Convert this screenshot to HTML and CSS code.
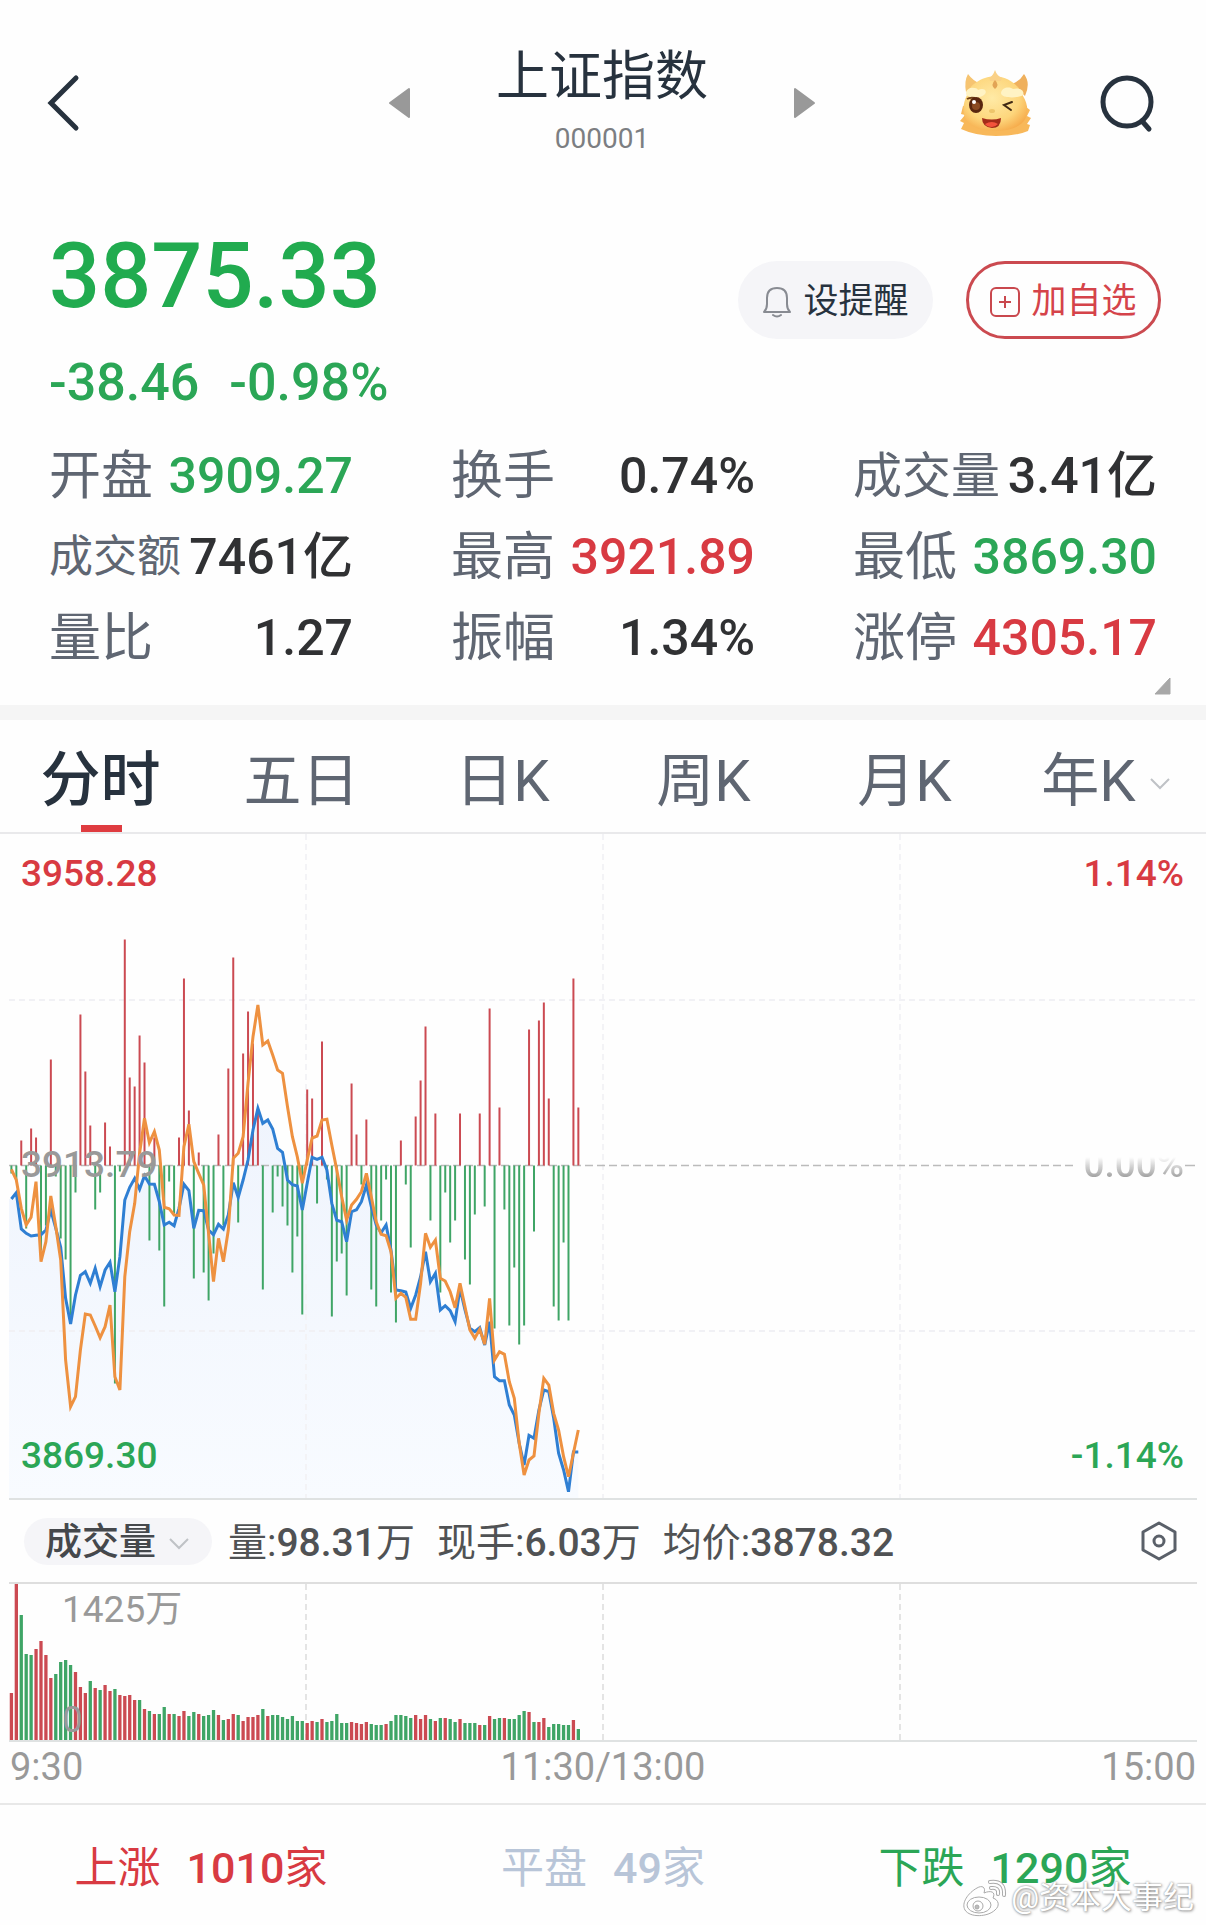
FILE: index.html
```html
<!DOCTYPE html>
<html lang="zh-CN">
<head>
  <meta charset="UTF-8" />
  <meta name="viewport" content="width=device-width, initial-scale=1.0" />
  <title>上证指数 000001</title>
  <link rel="stylesheet" href="styles.css">
</head>
<body>

  <header class="topbar">
    <button class="icon-btn back" aria-label="返回">
      <svg width="34" height="58" viewBox="0 0 34 58"><path d="M29 4 L4 29 L29 54" fill="none" stroke="#27323e" stroke-width="5" stroke-linecap="round" /></svg>
    </button>
    <div class="switcher">
      <button class="icon-btn" aria-label="上一个">
        <svg width="22" height="32" viewBox="0 0 22 32"><path d="M21 2 V30 L2 16 Z" fill="#999" stroke="#999" stroke-width="2" stroke-linejoin="round" /></svg>
      </button>
      <div class="name">
        <h1>上证指数</h1>
        <p>000001</p>
      </div>
      <button class="icon-btn" aria-label="下一个">
        <svg width="22" height="32" viewBox="0 0 22 32"><path d="M1 2 V30 L20 16 Z" fill="#999" stroke="#999" stroke-width="2" stroke-linejoin="round" /></svg>
      </button>
    </div>
    <div class="tools">
      <button class="icon-btn" aria-label="助手">
        <svg width="74" height="68" viewBox="0 0 74 68">
          <defs>
            <radialGradient id="face" cx="45%" cy="40%" r="65%">
              <stop offset="0" stop-color="#ffeaa6" />
              <stop offset="0.65" stop-color="#fdd67c" />
              <stop offset="1" stop-color="#f6ab4b" />
            </radialGradient>
          </defs>
          <path d="M5 37 L3 45 L7 46 L2 52 L6 54 L3 60 Q18 67 38 67 Q58 67 70 62 L72 56 L69 55 L73 49 L69 47 L72 41 L68 38 Z" fill="#f8b85a" />
          <path d="M8 23 Q6 12 10 5 Q15 12 23 15 Z" fill="#f6c471" />
          <path d="M54 15 Q62 12 66 5 Q73 14 67 27 Z" fill="#efb05d" />
          <path d="M37 7 C51 8 62 17 65 27 C73 40 73 61 38 62 C2 62 2 40 9 26 C11 16 23 8 37 7 Z" fill="url(#face)" />
          <path d="M31 9 Q35 7 37 1 Q39 7 44 9 L43 12 H32 Z" fill="#fad187" />
          <path d="M37 11 Q32 16 37 20 Q42 16 37 11 Z" fill="#e2a455" />
          <path d="M8 25 C8 17 19 18 20 21 C27 18 30 23 26 26 C21 30 9 29 8 25 Z M43 24 C44 17 53 18 55 20 C62 18 67 22 65 26 C62 29 43 30 43 24 Z" fill="#fff3c4" />
          <path d="M9 30 Q12 28 17 29" fill="none" stroke="#704018" stroke-width="2" />
          <ellipse cx="18" cy="36" rx="7" ry="8" fill="#59260f" />
          <circle cx="18" cy="37" r="4" fill="#8b4a22" />
          <circle cx="16" cy="33" r="2" fill="#fff" />
          <path d="M54 33 L46 36 L53 41" fill="none" stroke="#402914" stroke-width="2" stroke-linecap="round" />
          <ellipse cx="34" cy="42" rx="3" ry="2" fill="#eec56b" />
          <path d="M24 49 Q34 52 43 49 Q43 59 34 59 Q24 58 24 49 Z" fill="#a32c19" />
          <path d="M27 55 Q34 51 40 55 Q37 58 34 58 Q29 58 27 55 Z" fill="#f4533c" />
        </svg>
      </button>
      <button class="icon-btn" aria-label="搜索">
        <svg width="58" height="60" viewBox="0 0 58 60"><g fill="none" stroke="#27323e" stroke-width="5" stroke-linecap="round"><circle cx="28" cy="29" r="24" /><path d="M43 48 L50 56" /></g></svg>
      </button>
    </div>
  </header>

  <section class="quote">
    <div class="price-row">
      <div class="price down">3875.33</div>
      <div class="actions">
        <button class="pill remind">
          <svg width="30" height="32" viewBox="0 0 30 32"><g fill="none" stroke="#888b92" stroke-width="2" stroke-linecap="round" stroke-linejoin="round"><path d="M2 26 Q5 23 5 18 V12 Q5 2 15 2 Q25 2 25 12 V18 Q25 23 28 26 Z" /><path d="M11 29 Q15 32 19 29" /></g></svg>
          设提醒
        </button>
        <button class="pill add">
          <svg width="30" height="32" viewBox="0 0 30 32"><g fill="none" stroke="#c9484e" stroke-width="2"><rect x="1" y="2" width="28" height="28" rx="5" /><path d="M9 16 H21 M15 10 V22" /></g></svg>
          加自选
        </button>
      </div>
    </div>
    <div class="change down"><span>-38.46</span><span>-0.98%</span></div>

    <dl class="stats">
      <div><dt>开盘</dt><dd class="down">3909.27</dd></div>
      <div><dt>换手</dt><dd>0.74%</dd></div>
      <div><dt class="three">成交量</dt><dd>3.41亿</dd></div>
      <div><dt class="small">成交额</dt><dd>7461亿</dd></div>
      <div><dt>最高</dt><dd class="up">3921.89</dd></div>
      <div><dt>最低</dt><dd class="down">3869.30</dd></div>
      <div><dt>量比</dt><dd>1.27</dd></div>
      <div><dt>振幅</dt><dd>1.34%</dd></div>
      <div><dt>涨停</dt><dd class="up">4305.17</dd></div>
    </dl>
    <svg class="more" width="17" height="18" viewBox="0 0 17 18"><path d="M16 1 V17 H1 Z" fill="#a8a8a8" stroke="#a8a8a8" stroke-linejoin="round" /></svg>
  </section>

  <nav class="tabs">
    <button class="active">分时</button>
    <button>五日</button>
    <button>日K</button>
    <button>周K</button>
    <button>月K</button>
    <button>年K <svg width="20" height="12" viewBox="0 0 20 12"><path d="M1 1 L10 10 L19 1" fill="none" stroke="#bfc2c6" stroke-width="2" /></svg></button>
  </nav>

  <div class="chart">
    <svg id="trend" viewBox="0 0 1188 664">
      <defs>
        <linearGradient id="fill" x1="0" y1="0" x2="0" y2="1">
          <stop offset="0" stop-color="#eff4fd" />
          <stop offset="1" stop-color="#f8fbff" />
        </linearGradient>
      </defs>
    </svg>
    <span class="tag top left up">3958.28</span>
    <span class="tag top right up">1.14%</span>
    <span class="tag mid left">3913.79</span>
    <span class="tag mid right fading">0.00%</span>
    <span class="tag low left down">3869.30</span>
    <span class="tag low right down">-1.14%</span>
  </div>

  <div class="legend">
    <div class="picker">
      <select aria-label="指标">
        <option>成交量</option>
        <option>成交额</option>
        <option>量比</option>
      </select>
      <svg width="20" height="12" viewBox="0 0 20 12"><path d="M1 1 L10 10 L19 1" fill="none" stroke="#bfc2c6" stroke-width="2" /></svg>
    </div>
    <span>量:<b>98.31</b>万</span>
    <span>现手:<b>6.03</b>万</span>
    <span>均价:<b>3878.32</b></span>
    <button class="icon-btn settings" aria-label="设置">
      <svg width="38" height="40" viewBox="0 0 38 40"><g fill="none" stroke="#5a6069" stroke-width="3" stroke-linejoin="round"><path d="M19 2 L35 11 V29 L19 38 L3 29 V11 Z" /><circle cx="19" cy="20" r="5" /></g></svg>
    </button>
  </div>

  <div class="chart volume">
    <svg id="volume" viewBox="0 0 1188 156"></svg>
    <span class="tag vol-max">1425万</span>
    <span class="tag vol-min">0</span>
  </div>
  <div class="axis"><span>9:30</span><span>11:30/13:00</span><span>15:00</span></div>

  <footer class="breadth">
    <div class="up"><span>上涨</span><span><b>1010</b>家</span></div>
    <div class="flat"><span>平盘</span><span><b>49</b>家</span></div>
    <div class="down"><span>下跌</span><span><b>1290</b>家</span></div>
    <div class="watermark">
      <svg width="46" height="38" viewBox="0 0 46 38">
        <g fill="#fff" stroke="#aaa" stroke-width="1">
          <path d="M15 9 C20 6 24 8 22 14 C29 11 34 13 31 19 C37 21 38 27 33 31 C26 38 8 39 3 31 C-1 24 6 14 15 9 Z" />
          <ellipse cx="17" cy="26" rx="12" ry="8" />
          <circle cx="16" cy="27" r="5" />
          <circle cx="15" cy="28" r="2" fill="#bbb" />
        </g>
        <path d="M28 3 Q43 1 42 16 M29 9 Q37 8 36 15" fill="none" stroke="#aaa" stroke-width="4" stroke-linecap="round" />
        <path d="M28 3 Q43 1 42 16 M29 9 Q37 8 36 15" fill="none" stroke="#fff" stroke-width="2" stroke-linecap="round" />
      </svg>
      <span>@资本大事纪</span>
    </div>
  </footer>

  <script src="script.js"></script>
</body>
</html>
```

FILE: styles.css
```css
* {
  box-sizing: border-box;
}

body {
  margin: 0;
  font-family: Roboto, "Noto Sans CJK SC", sans-serif;
  background: #fefefe;
  color: #303133;
}

h1, p, dl, dd {
  margin: 0;
}

button, select {
  font-family: inherit;
  border: none;
  background: none;
  padding: 0;
  cursor: pointer;
}

svg {
  display: block;
}

b {
  font-weight: 500;
}

.up {
  color: #d83a42;
}

.down {
  color: #2ba656;
}

/* top bar */
.topbar {
  display: grid;
  grid-template-columns: 1fr auto 1fr;
  align-items: center;
  padding: 46px 49px 0 47px;
}

.switcher {
  display: flex;
  align-items: center;
}

.name {
  width: 384px;
  text-align: center;
}

.name h1 {
  font-size: 53px;
  line-height: 62px;
  font-weight: 400;
  color: #27323e;
}

.name p {
  margin-top: 11px;
  font-size: 28px;
  line-height: 40px;
  color: #7c7e82;
}

.tools {
  display: flex;
  align-items: center;
  justify-content: flex-end;
  gap: 67px;
}

/* quote */
.quote {
  position: relative;
  padding: 68px 49px 36px;
  border-bottom: 15px solid #f5f5f5;
}

.price-row {
  display: flex;
  justify-content: space-between;
}

.price {
  font-size: 90px;
  line-height: 100px;
  font-weight: 500;
  color: #21ab4f;
}

.actions {
  display: flex;
  gap: 33px;
  padding-top: 34px;
  margin-right: -4px;
}

.pill {
  display: flex;
  align-items: center;
  justify-content: center;
  gap: 11px;
  width: 195px;
  height: 78px;
  padding-top: 4px;
  border-radius: 39px;
  font-size: 35px;
  line-height: 50px;
}

.remind {
  background: #f5f5f8;
  color: #27323e;
}

.add {
  border: 3px solid #cb4a50;
  color: #d5434a;
}

.change {
  display: flex;
  gap: 30px;
  margin-top: 14px;
  font-size: 52px;
  line-height: 60px;
  font-weight: 500;
}

.stats {
  display: grid;
  grid-template-columns: repeat(3, 1fr);
  column-gap: 98px;
  row-gap: 20px;
  margin-top: 33px;
}

.stats div {
  display: flex;
  justify-content: space-between;
  align-items: center;
  line-height: 61px;
  white-space: nowrap;
}

.stats dt {
  font-size: 52px;
  color: #5f6672;
}

.stats .three {
  font-size: 49px;
}

.stats .small {
  font-size: 44px;
}

.stats dd {
  font-size: 50px;
  font-weight: 500;
}

.more {
  position: absolute;
  right: 35px;
  bottom: 10px;
}

/* tabs */
.tabs {
  display: grid;
  grid-template-columns: repeat(6, 1fr);
  border-bottom: 2px solid #e9e9eb;
}

.tabs button {
  position: relative;
  display: flex;
  align-items: center;
  justify-content: center;
  height: 112px;
  padding-top: 10px;
  font-size: 58px;
  line-height: 70px;
  color: #5f6672;
}

.tabs svg {
  margin: 6px 0 0 14px;
}

.tabs .active {
  color: #27323e;
  font-size: 60px;
  font-weight: 500;
}

.tabs .active::after {
  content: "";
  position: absolute;
  left: 50%;
  bottom: 0;
  width: 41px;
  height: 7px;
  margin-left: -20px;
  background: #df3c40;
}

/* charts */
.chart {
  position: relative;
  margin: 0 9px;
  border-bottom: 2px solid #dfe2e2;
}

.chart svg {
  width: 100%;
  height: auto;
}

.volume {
  border-top: 2px solid #dedede;
}

.tag {
  position: absolute;
  font-size: 37px;
  line-height: 44px;
  font-weight: 500;
}

.tag.left { left: 12px; }
.tag.right { right: 13px; }
.tag.top { top: 18px; }
.tag.low { bottom: 20px; }

.tag.mid {
  top: 309px;
  color: #999;
}

.tag.fading {
  background: linear-gradient(transparent 32%, #999 82%);
  -webkit-background-clip: text;
  background-clip: text;
  color: transparent;
}

.tag.vol-max, .tag.vol-min {
  left: 53px;
  color: #999;
  font-weight: 400;
}

.tag.vol-max { top: 4px; }
.tag.vol-min { bottom: -2px; }

.legend {
  display: flex;
  align-items: center;
  gap: 22px;
  height: 82px;
  padding: 0 28px 0 24px;
  font-size: 39px;
  line-height: 46px;
  color: #505254;
  white-space: nowrap;
}

.legend > span {
  padding-top: 4px;
}

.picker {
  position: relative;
  margin-right: -6px;
}

.picker select {
  display: block;
  appearance: none;
  width: 188px;
  height: 47px;
  padding: 3px 0 0 21px;
  border-radius: 24px;
  background: #f5f5f8;
  font-size: 37px;
  font-weight: 500;
  color: #45484c;
}

.picker svg {
  position: absolute;
  right: 23px;
  top: 20px;
  pointer-events: none;
}

.settings {
  margin-left: auto;
}

.axis {
  display: grid;
  grid-template-columns: 1fr auto 1fr;
  padding: 0 10px 11px;
  border-bottom: 2px solid #e8e8e8;
  font-size: 38px;
  line-height: 50px;
  color: #999;
}

.axis span:last-child {
  text-align: right;
}

/* breadth */
.breadth {
  position: relative;
  display: grid;
  grid-template-columns: repeat(3, 1fr);
  padding: 33px 0 28px;
  font-size: 43px;
  line-height: 60px;
}

.breadth > div {
  display: flex;
  justify-content: center;
  gap: 26px;
}

.breadth .flat {
  color: #b8c5d8;
}

.breadth .watermark {
  position: absolute;
  right: 12px;
  bottom: 8px;
  align-items: center;
  gap: 3px;
  font-size: 31px;
  line-height: 40px;
  color: #fff;
  text-shadow: 0 0 2px #888, 1px 1px 3px #999;
}
```

FILE: script.js
```js
const RED = "#cb4a52";
const GREEN = "#3fa566";
const STEP = 4.93;
const START = 2.4;

// minute -> order flow, positive above the middle line, negative below
const flow = {
  0: -8, 1: -15, 2: 25, 3: -63, 4: 37, 5: 28, 6: -85, 7: -60, 8: 106, 9: -11,
  10: -73, 11: -94, 12: -150, 13: -27, 14: 151, 15: 94, 16: 40, 17: -44, 18: -27, 19: 43,
  20: 19, 21: -218, 22: -6, 23: 226, 24: 88, 25: 79, 26: 130, 27: 103, 28: -75, 29: 28,
  30: -85, 31: -141, 32: -16, 33: -48, 34: 28, 35: 187, 36: 55, 37: -113, 38: 13, 39: -107,
  40: -135, 41: -88, 42: 31, 43: -60, 44: 97, 45: 208, 46: -57, 47: 112, 48: 154, 49: 122,
  50: 55, 51: -124, 53: -47, 54: -11, 55: -41, 56: -60, 57: -107, 58: -71, 59: -149,
  60: 76, 61: 67, 62: -38, 63: 124, 64: -14, 65: -151, 66: -96, 67: -88, 68: -130, 69: 82,
  70: 31, 71: -19, 72: 46, 73: -124, 74: -141, 75: -55, 76: -14, 77: -127, 78: -157, 79: 25,
  80: -19, 81: -82, 82: 49, 83: 85, 84: 139, 85: -55, 86: 52, 87: -127, 88: -27, 89: -77,
  90: -55, 91: 52, 92: -94, 93: -119, 94: -49, 95: 52, 96: -41, 97: 157, 98: -163, 99: 58,
  100: -44, 101: -160, 102: -102, 103: -179, 104: -160, 105: 136, 106: -66, 107: 145, 108: 163, 109: 67,
  110: -141, 111: -155, 112: -77, 113: -155, 114: 187, 115: 58
};

const index = [
  117, 98, 207, 220, 228, 226, 224, 210, 150, 205, 262, 415, 492, 405, 346, 335, 370, 325, 380, 330,
  307, 395, 290, 120, 82, 55, 88, 47, 72, 73, 125, 195, 187, 197, 145, 73, 92, 205, 151, 152,
  210, 224, 193, 207, 165, 68, 112, 60, 0, -90, -155, -110, -120, -93, -35, -23, 60, 74, 78, 150,
  70, -8, -2, -8, 30, 130, 181, 185, 245, 155, 149, 125, 75, 140, 195, 218, 195, 270, 390, 392,
  396, 445, 405, 350, 275, 365, 340, 450, 437, 452, 485, 385, 450, 505, 515, 503, 555, 485, 650, 662,
  662, 735, 765, 850, 915, 826, 835, 750, 690, 695, 775, 880, 930, 995, 876, 876
];

const average = [
  28, 60, 145, 195, 172, 65, 305, 245, 108, 200, 300, 600, 740, 710, 570, 462, 465, 498, 533, 500,
  435, 650, 690, 350, 215, 130, -20, -125, -52, -85, -30, 142, 146, 165, 166, -40, -107, 5, 40, 75,
  220, 365, 235, 305, 210, -5, -20, -70, -230, -370, -465, -345, -357, -315, -270, -260, -160, -70, -10, 70,
  0, -66, -72, -120, -122, -45, 30, 110, 180, 135, 118, 95, 40, 110, 185, 223, 227, 275, 415, 400,
  412, 478, 478, 370, 220, 262, 240, 355, 363, 395, 443, 370, 440, 510, 535, 508, 553, 415, 600, 575,
  583, 665, 715, 850, 945, 900, 888, 760, 655, 675, 760, 810, 890, 950, 880, 810
];

// volume per minute, r = rising, g = falling
const volume = ("47r 157r 125g 86g 85g 91r 99r 85r 62r 66g 78g 80g 75g 68r 53r 47r 59g 52r 50g 55r " +
  "49r 51g 45r 44r 45r 40r 40g 31r 29g 26r 26g 33g 26r 26g 24r 29r 24g 28g 26r 24g " +
  "25g 30g 25r 20g 21r 26r 25g 19r 23r 23r 25r 31g 24r 25g 25g 23g 21g 24g 19g 19g " +
  "17r 19r 18g 21r 18g 19g 26g 17g 17g 18r 17r 16r 18r 16g 15g 15g 16r 19g 25g 25g " +
  "24g 22g 25r 21r 25r 21g 19r 22g 22r 21g 18g 21r 17g 17g 17g 15r 15g 24r 21g 22g " +
  "22r 21g 21g 25g 29g 28r 18g 18r 22r 13g 16g 16g 15g 15g 20r 11g").split(" ");

const x = i => START + i * STEP;
const y = v => 326 + v / 3;
const points = list => list.map((v, i) => `${x(i).toFixed(1)},${y(v).toFixed(1)}`).join(" ");

function line(x1, y1, x2, y2, color, width, dash) {
  return `<line x1="${x1}" y1="${y1}" x2="${x2}" y2="${y2}" stroke="${color}" stroke-width="${width}"${dash ? ` stroke-dasharray="${dash}"` : ""} />`;
}

function drawTrend() {
  const middle = 331.5;
  let out = `<polygon points="0,664 0,${y(117)} ${points(index)} ${x(115)},664" fill="url(#fill)" />`;
  [297, 594, 891].forEach(gx => out += line(gx, 0, gx, 664, "#f3f3f6", 2, "6 4"));
  [166, 497].forEach(gy => out += line(0, gy, 1188, gy, "#f1f1f5", 2, "6 4"));
  out += line(0, middle, 1064, middle, "#bbb", 1.5, "8 4") + line(1176, middle, 1186, middle, "#bbb", 1.5);
  for (const i in flow) {
    out += line(x(i), middle, x(i), middle - flow[i], flow[i] > 0 ? RED : GREEN, 2);
  }
  out += `<polyline points="${points(index)}" fill="none" stroke="#2f7fd3" stroke-width="3" />`;
  out += `<polyline points="${points(average)}" fill="none" stroke="#ee9140" stroke-width="3" />`;
  document.getElementById("trend").innerHTML += out;
}

function drawVolume() {
  let out = "";
  [297, 594, 891].forEach(gx => out += line(gx, 0, gx, 156, "#dcdcdc", 1.5, "6 4"));
  volume.forEach((v, i) => {
    out += line(x(i), 156, x(i), 156 - parseInt(v), v.endsWith("r") ? RED : GREEN, 3.3);
  });
  document.getElementById("volume").innerHTML = out;
}

drawTrend();
drawVolume();
```
